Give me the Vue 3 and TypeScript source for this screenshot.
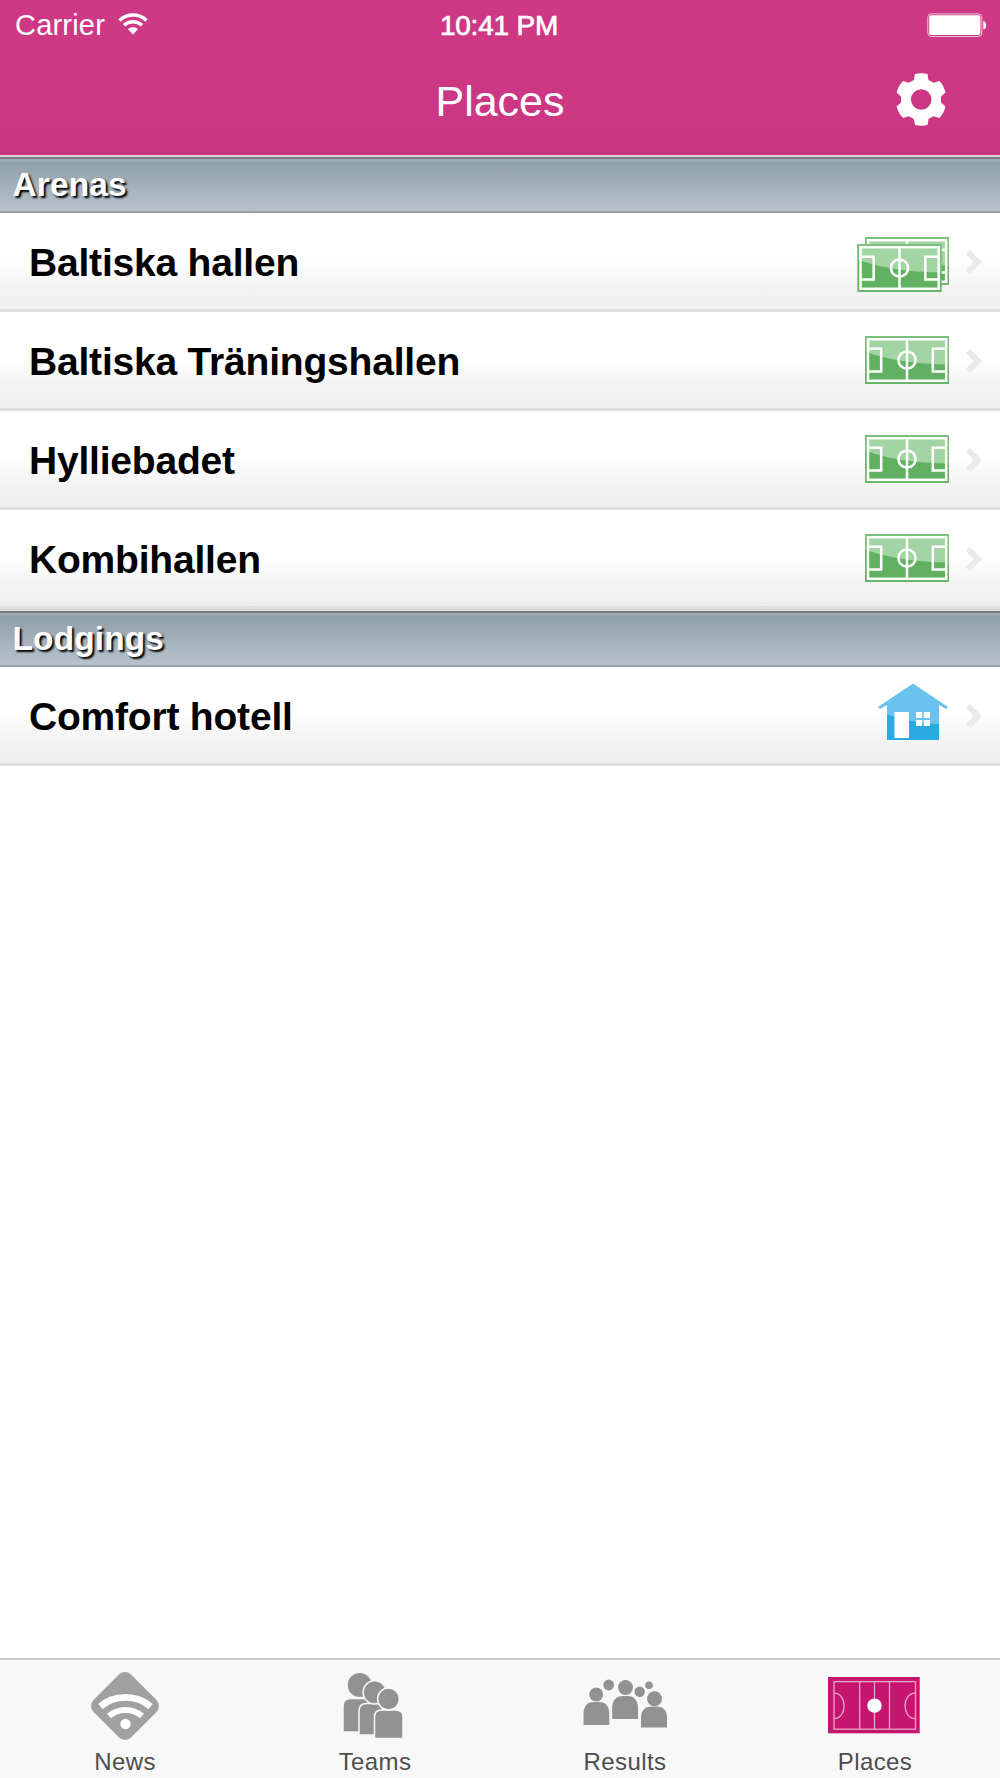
<script setup lang="ts">
type IconName = 'pitch' | 'pitches' | 'house'

interface Place {
  name: string
  icon: IconName
}

interface Section {
  title: string
  places: Place[]
}

const sections: Section[] = [
  {
    title: 'Arenas',
    places: [
      { name: 'Baltiska hallen', icon: 'pitches' },
      { name: 'Baltiska Träningshallen', icon: 'pitch' },
      { name: 'Hylliebadet', icon: 'pitch' },
      { name: 'Kombihallen', icon: 'pitch' },
    ],
  },
  { title: 'Lodgings', places: [{ name: 'Comfort hotell', icon: 'house' }] },
]

const tabs: string[] = ['News', 'Teams', 'Results', 'Places']
</script>

<template>
  <div class="screen">
    <svg class="defs" width="0" height="0" aria-hidden="true">
      <symbol id="pitch" viewBox="0 0 84 48">
        <rect width="84" height="48" fill="#62b162" />
        <path d="M0 0H84V28.500C52 28 20 24 0 15Z" fill="#a3d4a3" />
        <rect x="1" y="1" width="82" height="46" fill="none" stroke="#66b666" stroke-opacity=".7" stroke-width="2" />
        <g fill="none" stroke="#fff" stroke-width="2.500">
          <rect x="3" y="3.200" width="78.200" height="41.600" />
          <path d="M42 3V45M3 12.700H16.200V35.500H3M81 12.700H67.800V35.500H81" />
          <circle cx="42" cy="24" r="8.600" />
        </g>
      </symbol>
    </svg>

    <header class="top">
      <div class="status">
        <div class="signal">
          <span class="carrier">Carrier</span>
          <svg class="wifi" width="30" height="23" viewBox="0 0 30 23">
            <g fill="none" stroke="#fff" stroke-width="3.500">
              <path d="M1.500 7.400C9 .2 21 .2 28.500 7.400" />
              <path d="M6 12.200C11.200 7.500 18.800 7.500 24 12.200" />
            </g>
            <path d="M9.900 16C12.800 13.600 17.200 13.600 20.100 16L15 21.500Z" fill="#fff" />
          </svg>
        </div>
        <span class="time">10:41 PM</span>
        <svg class="battery" width="60" height="25" viewBox="0 0 60 25">
          <rect x=".8" y=".9" width="54" height="22.600" rx="3.500" fill="none" stroke="#fff" stroke-width="1" stroke-opacity=".7" />
          <rect x="2.200" y="2.300" width="51.200" height="19.800" rx="2" fill="#fff" />
          <path d="M56.300 8C60.200 8.600 60.200 15.800 56.300 16.400Z" fill="#fff" />
        </svg>
      </div>
      <div class="nav">
        <h1>Places</h1>
        <svg class="gear" width="50" height="53" viewBox="0 0 50 53">
          <path
            fill="#fff"
            fill-rule="evenodd"
            d="M19 1Q25 -.5 31.500 1L32.500 7L37.500 9.800L43.500 8Q48 13 49.500 19.500L45 23.500V29.500L49.500 33.500Q48 40 43.500 45L37.500 43.200L32.500 46L31.500 52Q25 53.500 19 52L17.800 46L12.800 43.200L7 45Q2.200 40 .6 33.500L5 29.500V23.500L.6 19.500Q2.200 13 7 8L12.800 9.800L17.800 7ZM25.200 16.200A10.300 10.300 0 1 0 25.200 36.800A10.300 10.300 0 1 0 25.200 16.200Z"
          />
        </svg>
      </div>
    </header>

    <main>
      <section v-for="section in sections" :key="section.title">
        <h2>{{ section.title }}</h2>
        <ul>
          <li v-for="place in section.places" :key="place.name">
            <span class="name">{{ place.name }}</span>
            <svg v-if="place.icon === 'pitch'" class="icon pitch" width="84" height="48" viewBox="0 0 84 48">
              <use href="#pitch" width="84" height="48" />
            </svg>
            <svg v-else-if="place.icon === 'pitches'" class="icon pitches" width="92" height="56" viewBox="0 0 92 56">
              <use href="#pitch" x="8" y="1" width="84" height="48" />
              <use href="#pitch" y="8" width="85" height="48" />
            </svg>
            <svg v-else class="icon house" width="70" height="58" viewBox="0 0 70 58">
              <path d="M35 .5L70 24L68 26L61 22V57H9V22L2 26L0 24Z" fill="#6ac3ec" />
              <path d="M9 31.500C26 37 43 41 61 41V57H9Z" fill="#29abe2" />
              <path d="M16.500 29H31V55H16.500ZM38 29H44.300V35H38ZM45.800 29H52V35H45.800ZM38 37H44.300V43H38ZM45.800 37H52V43H45.800Z" fill="#fff" />
            </svg>
            <svg class="chevron" width="18" height="26" viewBox="0 0 18 26">
              <path d="M5 .8L17 13L5 25.200L.8 21.200L8.500 13L.8 4.800Z" fill="#e9eaec" />
            </svg>
          </li>
        </ul>
      </section>
    </main>

    <nav class="tabs">
      <a v-for="tab in tabs" :key="tab">
        <svg v-if="tab === 'News'" width="100" height="78" viewBox="0 0 100 78">
          <rect x="23.500" y="19.500" width="53" height="53" rx="8.500" transform="rotate(45 50 46)" fill="#a1a1a1" />
          <g fill="none" stroke="#fff">
            <path d="M25.500 46.500C39 34.300 62 34.300 75.500 46.500" stroke-width="6.800" />
            <path d="M34 56C43.500 48 57.500 48 67 56" stroke-width="6" />
          </g>
          <circle cx="50.500" cy="64" r="5.200" fill="#fff" />
        </svg>
        <svg v-else-if="tab === 'Teams'" width="100" height="78" viewBox="-.5 -1 100 78">
          <g fill="#929292" stroke="#f8f8f8" stroke-width="1.500">
            <path d="M17.500 71V45Q17.500 37.500 25 37.500H45V71Z" />
            <circle cx="34.200" cy="24" r="12.700" />
            <path d="M33.500 74V50Q33.500 42.500 41 42.500H57V74Z" />
            <circle cx="49.200" cy="31.300" r="11.600" />
            <path d="M49 77.500V56Q49 49 56 49H70Q77.500 49 77.500 56V77.500Z" />
            <circle cx="63" cy="38" r="10.900" />
          </g>
        </svg>
        <svg v-else-if="tab === 'Results'" width="100" height="78" viewBox="10 -.5 100 78">
          <g fill="#929292">
            <circle cx="31.200" cy="34" r="6.900" />
            <circle cx="43.700" cy="24.500" r="5.400" />
            <circle cx="60.500" cy="27" r="7.500" />
            <circle cx="74.700" cy="31.200" r="5.200" />
            <circle cx="84" cy="24.800" r="3.800" />
            <circle cx="89.500" cy="38.200" r="7.500" />
            <path d="M18.500 64.500V54Q18.500 41.500 29 41.500H34Q44.300 41.500 44.300 54V64.500ZM47.200 58.500V48Q47.200 35.500 58 35.500H62.500Q73 35.500 73 48V58.500ZM76 67V57.500Q76 46 87 46H91.500Q102 46 102 57.500V67Z" />
          </g>
        </svg>
        <svg v-else width="100" height="78" viewBox="1 0 100 78">
          <rect x="4" y="17" width="91.700" height="56.300" fill="#c6156f" />
          <g fill="none" stroke="#eaa6ca" stroke-width="1.300">
            <rect x="10" y="21.600" width="81.500" height="47.600" />
            <path d="M35.700 22V69M50.500 22V69M65.500 22V69M10 33.200C23.500 33 23.500 58.500 10 58.500M91.500 33.200C77.500 33 77.500 58.500 91.500 58.500" />
          </g>
          <circle cx="50.500" cy="45.700" r="7.200" fill="#fff" />
        </svg>
        <span>{{ tab }}</span>
      </a>
    </nav>
  </div>
</template>

<style>
body {
  margin: 0;
}
</style>

<style scoped>
.screen {
  display: flex;
  flex-direction: column;
  width: 1000px;
  height: 1778px;
  overflow: hidden;
  background: #fff;
  font-family: "Liberation Sans", Arial, sans-serif;
}
.defs {
  position: absolute;
}
.top {
  box-sizing: border-box;
  height: 157px;
  flex: none;
  color: #fff;
  background: linear-gradient(#ce3985, #cb3782 80%, #c83580);
  border-bottom: 2px solid #ddd3d9;
}
.status {
  display: grid;
  grid-template-columns: 1fr auto 1fr;
  align-items: start;
  height: 50px;
  padding: 0 13px;
  box-sizing: border-box;
}
.signal {
  display: flex;
  align-items: flex-start;
  padding-left: 2px;
}
.carrier {
  width: 103px;
  font-size: 29px;
  line-height: 32px;
  letter-spacing: 0.2px;
  margin-top: 9px;
}
.wifi {
  margin-top: 13px;
}
.time {
  font-size: 28px;
  line-height: 32px;
  letter-spacing: -0.2px;
  margin: 10px 2px 0 0;
  -webkit-text-stroke: 0.7px #fff;
}
.battery {
  justify-self: end;
  margin-top: 13px;
}
.nav {
  display: grid;
  grid-template-columns: 1fr auto 1fr;
  padding: 0 54px;
}
h1 {
  grid-column: 2;
  margin: 27px 0 0;
  font-size: 43px;
  line-height: 48px;
  font-weight: 400;
}
.gear {
  justify-self: end;
  margin-top: 23px;
}
main {
  flex: 1;
}
section + section {
  border-top: 2px solid #dbdbdb;
}
h2 {
  box-sizing: border-box;
  height: 56px;
  margin: 0;
  padding: 3px 12.500px 0;
  border-top: 2px solid #737e86;
  border-bottom: 2px solid #999fa5;
  background: linear-gradient(#9eabb5 0 2px, #909fa9 3px, #b8c2cc);
  color: #fff;
  font-size: 33.500px;
  line-height: 46px;
  letter-spacing: 0.1px;
  text-shadow: 2px 2px 2px #000;
}
ul {
  margin: 0;
  padding: 0;
  list-style: none;
}
li {
  display: flex;
  align-items: center;
  box-sizing: border-box;
  height: 99px;
  padding: 0 17px 0 29px;
  border-bottom: 3px solid #dfdfdf;
  background: linear-gradient(#fff 48%, #f4f4f4 75%, #efefef);
}
.name {
  flex: 1;
  font-size: 39px;
  line-height: 48px;
  font-weight: 700;
  letter-spacing: -0.2px;
  padding-top: 4px;
}
.icon {
  margin-right: 16px;
}
.pitch {
  margin-top: -1px;
}
.pitches {
  margin-top: 6px;
}
.house {
  margin: -7px 17px 0 0;
}
.chevron {
  margin-top: 2px;
}
.tabs {
  display: grid;
  grid-template-columns: repeat(4, 250px);
  box-sizing: border-box;
  height: 120px;
  flex: none;
  border-top: 2px solid #c8c8c8;
  background: #f8f8f8;
}
.tabs a {
  display: flex;
  flex-direction: column;
  align-items: center;
  color: #4d4d4d;
}
.tabs svg {
  display: block;
  flex: none;
  overflow: visible;
}
.tabs span {
  font-size: 24px;
  line-height: 28px;
  letter-spacing: 0.4px;
  margin-top: 10px;
}
</style>
